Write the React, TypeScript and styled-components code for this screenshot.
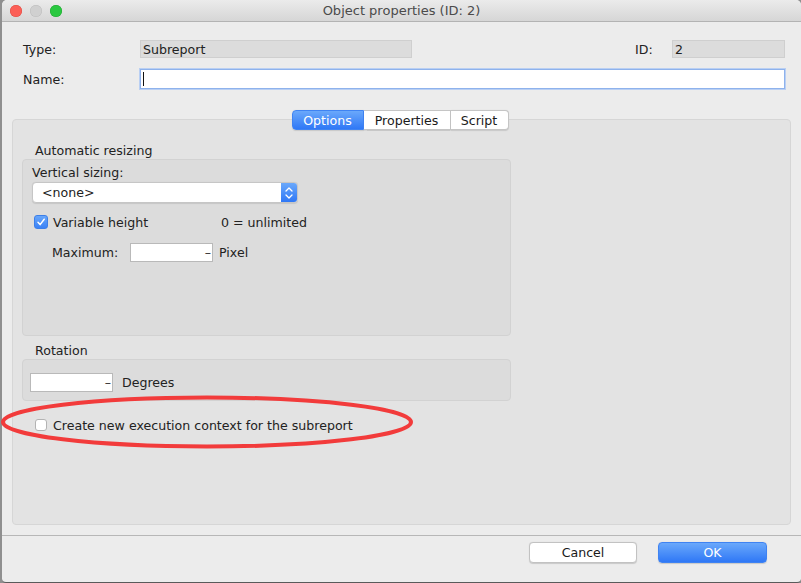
import React from "react";
import styled, { createGlobalStyle } from "styled-components";

const Global = createGlobalStyle`
  html, body { margin: 0; padding: 0; }
  body {
    width: 801px; height: 583px; overflow: hidden;
    background: #8f8f8f;
    font-family: "DejaVu Sans", "Liberation Sans", sans-serif;
    font-size: 12.6px; color: #222;
  }
`;

const Stage = styled.div`
  position: relative;
  width: 801px;
  height: 583px;
`;

const Window = styled.div`
  margin-left: 2px;
  width: 799px;
  height: 582px;
  background: #ececec;
  border-radius: 5px 5px 4px 4px;
  border-bottom: 1px solid #5a5a5a;
  display: flex;
  flex-direction: column;
  overflow: hidden;
`;

const TitleBar = styled.div`
  height: 21px;
  flex: none;
  display: flex;
  align-items: center;
  position: relative;
  background: linear-gradient(#ebebeb, #d6d6d6);
  border-bottom: 1px solid #b3b3b3;
`;

const Lights = styled.div`
  display: flex;
  gap: 8px;
  padding-left: 8px;
`;

const Light = styled.span<{ $c: string; $b: string }>`
  width: 12px;
  height: 12px;
  border-radius: 50%;
  background: ${(p) => p.$c};
  box-shadow: inset 0 0 0 0.5px ${(p) => p.$b};
`;

const Title = styled.div`
  position: absolute;
  left: 0; right: 0; top: 0; bottom: 0;
  display: flex; align-items: center; justify-content: center;
  color: #4b4b4b;
  font-size: 13px;
  pointer-events: none;
`;

const Form = styled.div`
  padding: 18px 16px 0 21px;
  display: flex;
  flex-direction: column;
  gap: 11px;
`;

const FormRow = styled.div`
  display: flex;
  align-items: center;
`;

const FormLabel = styled.span<{ $w?: number }>`
  width: ${(p) => p.$w ?? 117}px;
  flex: none;
`;

const ReadField = styled.div<{ $w: number }>`
  width: ${(p) => p.$w}px;
  height: 18px;
  box-sizing: border-box;
  background: #dcdcdc;
  border: 1px solid #cfcfcf;
  padding-left: 2px;
  display: flex;
  align-items: center;
`;

const Spacer = styled.div`
  flex: 1;
`;

const NameField = styled.div`
  flex: 1;
  height: 20px;
  box-sizing: border-box;
  background: #fff;
  border: 1px solid #8eb2ec;
  box-shadow: 0 0 0 1px #b9cff3;
  display: flex;
  align-items: center;
  padding-left: 2px;
`;

const Caret = styled.span`
  width: 1px;
  height: 14px;
  background: #111;
`;

const TabArea = styled.div`
  margin: 21px 10px 0 10px;
  display: flex;
  flex-direction: column;
  align-items: center;
`;

const Tabs = styled.div`
  display: flex;
  height: 20px;
  position: relative;
  z-index: 1;
  margin-bottom: -11px;
  margin-left: -3px;
`;

const Tab = styled.div<{ $on?: boolean; $first?: boolean; $last?: boolean; $w: number }>`
  width: ${(p) => p.$w}px;
  box-sizing: border-box;
  display: flex;
  align-items: center;
  justify-content: center;
  font-size: 12.6px;
  background: ${(p) => (p.$on ? "linear-gradient(#6aa8fb, #2f78f6)" : "#fff")};
  color: ${(p) => (p.$on ? "#fff" : "#1a1a1a")};
  border: 1px solid ${(p) => (p.$on ? "#3f83f2" : "#c5c5c5")};
  border-left-width: ${(p) => (p.$first ? 1 : 0)}px;
  border-radius: ${(p) => (p.$first ? "4px 0 0 4px" : p.$last ? "0 4px 4px 0" : "0")};
  box-shadow: 0 0.5px 1px rgba(0,0,0,0.12);
`;

const Panel = styled.div`
  align-self: stretch;
  height: 406px;
  box-sizing: border-box;
  background: #e3e3e3;
  border: 1px solid #d6d6d6;
  border-radius: 4px;
  padding: 22px 0 0 9px;
  display: flex;
  flex-direction: column;
`;

const GroupTitle = styled.div`
  padding-left: 13px;
  height: 17px;
  line-height: 18px;
`;

const Group = styled.div<{ $h: number }>`
  width: 489px;
  height: ${(p) => p.$h}px;
  box-sizing: border-box;
  background: #dcdcdc;
  border: 1px solid #d2d2d2;
  border-radius: 4px;
  display: flex;
  flex-direction: column;
`;

const SizingBox = styled.div`
  padding: 4px 0 0 9px;
  display: flex;
  flex-direction: column;
`;

const SmallLabel = styled.div`
  height: 17px;
  line-height: 17px;
`;

const Combo = styled.div`
  margin-top: 1px;
  width: 266px;
  height: 21px;
  box-sizing: border-box;
  background: #fff;
  border: 1px solid #c6c6c6;
  border-radius: 4px;
  display: flex;
  align-items: center;
  overflow: hidden;
  box-shadow: 0 0.5px 1px rgba(0,0,0,0.1);
`;

const ComboText = styled.span`
  flex: 1;
  padding-left: 9px;
`;

const ComboArrow = styled.span`
  width: 16px;
  height: 100%;
  background: linear-gradient(#6aa8fb, #2f78f6);
  display: flex;
  align-items: center;
  justify-content: center;
`;

const CheckRow = styled.div<{ $mt: number; $ml: number }>`
  margin-top: ${(p) => p.$mt}px;
  margin-left: ${(p) => p.$ml}px;
  display: flex;
  align-items: center;
  height: 16px;
`;

const Check = styled.span<{ $on?: boolean }>`
  width: ${(p) => (p.$on ? 14 : 12)}px;
  height: ${(p) => (p.$on ? 14 : 12)}px;
  box-sizing: border-box;
  border-radius: 3px;
  flex: none;
  background: ${(p) => (p.$on ? "linear-gradient(#68a6fa, #3a82f6)" : "#fff")};
  border: 1px solid ${(p) => (p.$on ? "#3c7fe8" : "#b3b3b3")};
  display: flex;
  align-items: center;
  justify-content: center;
  margin-right: ${(p) => (p.$on ? 5 : 6)}px;
`;

const CheckText = styled.span<{ $w?: number }>`
  width: ${(p) => (p.$w ? `${p.$w}px` : "auto")};
`;

const SpinRow = styled.div<{ $mt: number; $ml: number }>`
  margin-top: ${(p) => p.$mt}px;
  margin-left: ${(p) => p.$ml}px;
  display: flex;
  align-items: center;
`;

const Spin = styled.div`
  width: 83px;
  height: 19px;
  box-sizing: border-box;
  background: #fff;
  border: 1px solid #b9b9b9;
  display: flex;
  align-items: center;
  justify-content: flex-end;
  padding-right: 1px;
  color: #333;
  margin-right: 6px;
`;

const RotationTitle = styled(GroupTitle)`
  margin-top: 6px;
`;

const RotBox = styled.div`
  padding: 13px 0 0 7px;
  display: flex;
  align-items: center;
`;

const DegreesText = styled.span`
  margin-left: 3px;
`;

const Separator = styled.div`
  margin-top: 10px;
  height: 1px;
  background: #b7b7b7;
  margin-left: -2px;
`;

const Buttons = styled.div`
  margin-top: 6px;
  display: flex;
  justify-content: flex-end;
  gap: 21px;
  padding-right: 34px;
`;

const Button = styled.div<{ $primary?: boolean; $w: number }>`
  width: ${(p) => p.$w}px;
  height: 21px;
  flex: none;
  box-sizing: border-box;
  border-radius: 4px;
  display: flex;
  align-items: center;
  justify-content: center;
  font-size: 12.6px;
  background: ${(p) => (p.$primary ? "linear-gradient(#6aa8fb, #2f78f6)" : "#fff")};
  color: ${(p) => (p.$primary ? "#fff" : "#1a1a1a")};
  border: 1px solid ${(p) => (p.$primary ? "#3f83f2" : "#c2c2c2")};
  box-shadow: 0 0.5px 1px rgba(0,0,0,0.15);
`;

const Ellipse = styled.svg`
  position: absolute;
  left: 0;
  top: 389px;
  pointer-events: none;
`;

export default function App() {
  return (
    <Stage>
      <Global />
      <Window>
        <TitleBar>
          <Lights>
            <Light $c="#fc5f57" $b="#de4a41" />
            <Light $c="#d0d0d0" $b="#bcbcbc" />
            <Light $c="#2ac840" $b="#1fa630" />
          </Lights>
          <Title>Object properties (ID: 2)</Title>
        </TitleBar>
        <Form>
          <FormRow>
            <FormLabel>Type:</FormLabel>
            <ReadField $w={272}>Subreport</ReadField>
            <Spacer />
            <FormLabel $w={37}>ID:</FormLabel>
            <ReadField $w={113}>2</ReadField>
          </FormRow>
          <FormRow>
            <FormLabel>Name:</FormLabel>
            <NameField>
              <Caret />
            </NameField>
          </FormRow>
        </Form>
        <TabArea>
          <Tabs>
            <Tab $on $first $w={72}>Options</Tab>
            <Tab $w={87}>Properties</Tab>
            <Tab $last $w={58}>Script</Tab>
          </Tabs>
          <Panel>
            <GroupTitle>Automatic resizing</GroupTitle>
            <Group $h={177}>
              <SizingBox>
                <SmallLabel>Vertical sizing:</SmallLabel>
                <Combo>
                  <ComboText>&lt;none&gt;</ComboText>
                  <ComboArrow>
                    <svg width="8" height="14" viewBox="0 0 8 14">
                      <path d="M1 5 L4 2 L7 5 M1 9 L4 12 L7 9" fill="none" stroke="#fff" strokeWidth="1.3" strokeLinecap="round" strokeLinejoin="round" />
                    </svg>
                  </ComboArrow>
                </Combo>
                <CheckRow $mt={11} $ml={2}>
                  <Check $on>
                    <svg width="10" height="10" viewBox="0 0 10 10">
                      <path d="M2 5.3 L4.1 7.6 L8.2 2.2" fill="none" stroke="#fff" strokeWidth="1.5" strokeLinecap="round" strokeLinejoin="round" />
                    </svg>
                  </Check>
                  <CheckText $w={168}>Variable height</CheckText>
                  <CheckText>0 = unlimited</CheckText>
                </CheckRow>
                <SpinRow $mt={13} $ml={20}>
                  <FormLabel $w={78}>Maximum:</FormLabel>
                  <Spin>–</Spin>
                  <span>Pixel</span>
                </SpinRow>
              </SizingBox>
            </Group>
            <RotationTitle>Rotation</RotationTitle>
            <Group $h={42}>
              <RotBox>
                <Spin>–</Spin>
                <DegreesText>Degrees</DegreesText>
              </RotBox>
            </Group>
            <CheckRow $mt={16} $ml={13}>
              <Check />
              <CheckText>Create new execution context for the subreport</CheckText>
            </CheckRow>
          </Panel>
        </TabArea>
        <Separator />
        <Buttons>
          <Button $w={108}>Cancel</Button>
          <Button $primary $w={109}>OK</Button>
        </Buttons>
      </Window>
      <Ellipse width="420" height="66" viewBox="0 0 420 66">
        <ellipse cx="207" cy="33" rx="204" ry="24.5" fill="none" stroke="#f23b3b" strokeWidth="4" />
      </Ellipse>
    </Stage>
  );
}
